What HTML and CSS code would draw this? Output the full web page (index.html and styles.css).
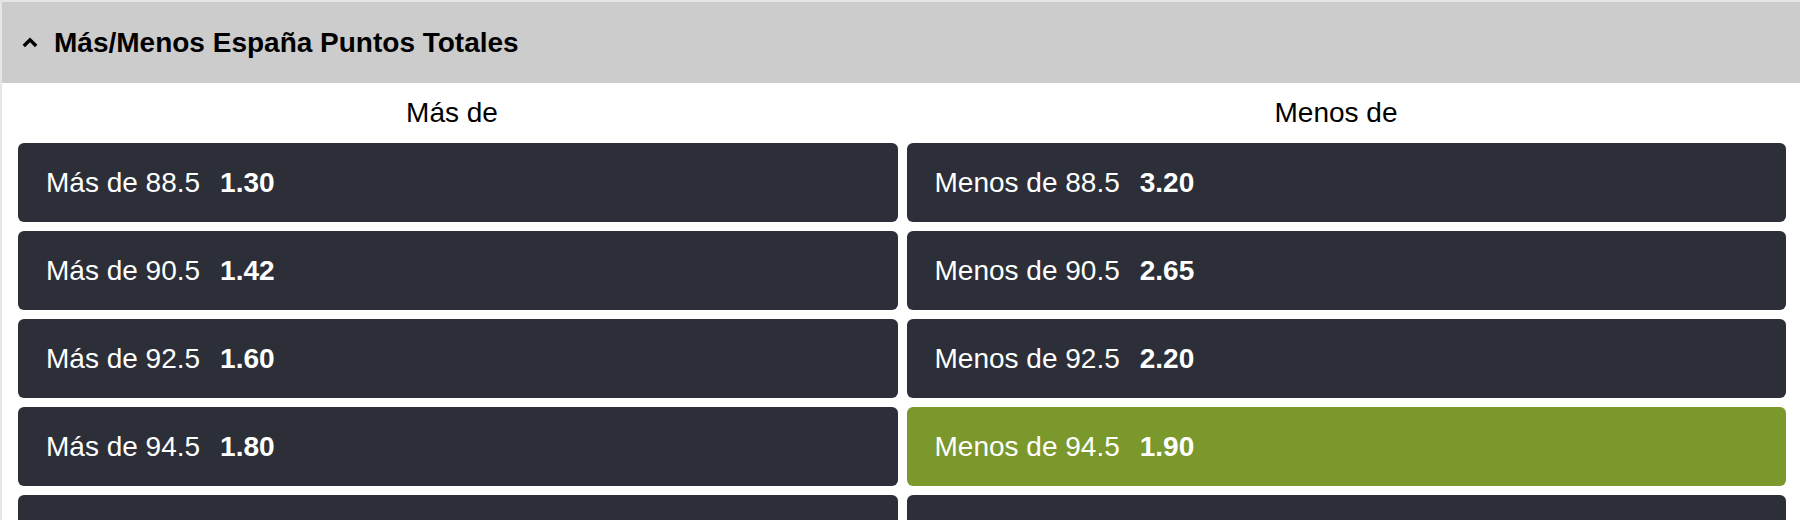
FILE: index.html
```html
<!DOCTYPE html>
<html lang="es">
<head>
<meta charset="utf-8">
<title>Más/Menos España Puntos Totales</title>
<link rel="stylesheet" href="styles.css">
</head>
<body>
<section class="market">
  <header class="market-header">
    <svg class="chevron" viewBox="0 0 16 11" width="16" height="11" aria-hidden="true">
      <path d="M1.8 9 L8 2.8 L14.2 9" fill="none" stroke="#000" stroke-width="3.4" stroke-linecap="butt" stroke-linejoin="miter"/>
    </svg>
    <h2 class="market-title">Más/Menos España Puntos Totales</h2>
  </header>
  <div class="col-headers">
    <div class="col-header">Más de</div>
    <div class="col-header">Menos de</div>
  </div>
  <div class="odds-grid">
    <button class="odd"><span class="odd-label">Más de 88.5</span><span class="odd-price">1.30</span></button>
    <button class="odd"><span class="odd-label">Menos de 88.5</span><span class="odd-price">3.20</span></button>
    <button class="odd"><span class="odd-label">Más de 90.5</span><span class="odd-price">1.42</span></button>
    <button class="odd"><span class="odd-label">Menos de 90.5</span><span class="odd-price">2.65</span></button>
    <button class="odd"><span class="odd-label">Más de 92.5</span><span class="odd-price">1.60</span></button>
    <button class="odd"><span class="odd-label">Menos de 92.5</span><span class="odd-price">2.20</span></button>
    <button class="odd"><span class="odd-label">Más de 94.5</span><span class="odd-price">1.80</span></button>
    <button class="odd odd-selected"><span class="odd-label">Menos de 94.5</span><span class="odd-price">1.90</span></button>
    <button class="odd"><span class="odd-label">Más de 96.5</span><span class="odd-price">2.05</span></button>
    <button class="odd"><span class="odd-label">Menos de 96.5</span><span class="odd-price">1.70</span></button>
  </div>
</section>
</body>
</html>
```

FILE: styles.css
```css
html, body {
  margin: 0;
  padding: 0;
  background: #ffffff;
  overflow: hidden;
}

body {
  font-family: "Liberation Sans", Arial, Helvetica, sans-serif;
  color: #000;
}

.market {
  border-top: 2px solid #e6e6e6;
  border-left: 2px solid #e6e6e6;
  height: 600px;
}

.market-header {
  height: 81px;
  background: #cccccc;
  display: flex;
  align-items: center;
  padding-left: 20px;
  gap: 16px;
}

.chevron {
  display: block;
  flex: none;
}

.market-title {
  margin: 0;
  font-size: 28px;
  font-weight: bold;
  line-height: 1;
}

.col-headers {
  display: grid;
  grid-template-columns: 1fr 1fr;
  height: 60px;
  padding: 0 22px 0 8px;
  align-items: center;
}

.col-header {
  text-align: center;
  font-size: 28px;
  line-height: 1;
}

.odds-grid {
  display: grid;
  grid-template-columns: 1fr 1fr;
  column-gap: 9px;
  row-gap: 9px;
  padding: 0 14px 0 16px;
}

.odd {
  height: 79px;
  border: none;
  border-radius: 6px;
  background: #2c2f38;
  color: #ffffff;
  font-family: inherit;
  font-size: 28px;
  display: flex;
  align-items: center;
  gap: 20px;
  padding: 0 0 0 28px;
  margin: 0;
  text-align: left;
}

.odd-selected {
  background: #7b982c;
}

.odd-price {
  font-weight: bold;
}
```
